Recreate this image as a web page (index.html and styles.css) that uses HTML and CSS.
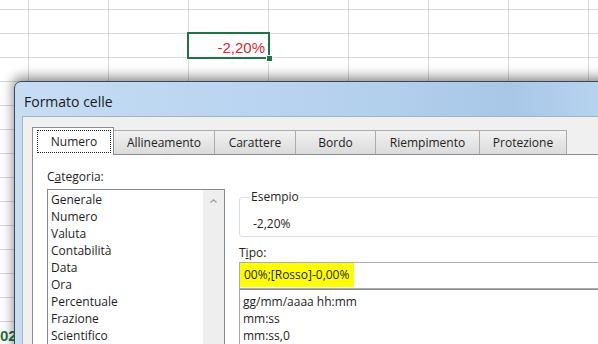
FILE: index.html
```html
<!DOCTYPE html>
<html lang="it">
<head>
    <meta charset="UTF-8">
    <meta name="viewport" content="width=device-width, initial-scale=1.0">
    <title>Formato celle</title>
    <link rel="stylesheet" href="styles.css">
</head>
<body>

    <!-- foglio sotto la finestra -->
    <table class="sheet">
        <tr><td></td><td></td><td></td><td></td><td></td><td></td><td></td><td></td><td></td></tr>
        <tr><td></td><td></td><td></td><td></td><td></td><td></td><td></td><td></td><td></td></tr>
        <tr><td></td><td></td><td></td><td class="active">-2,20%<span class="handle"></span></td><td></td><td></td><td></td><td></td><td></td></tr>
        <tr><td></td><td></td><td></td><td></td><td></td><td></td><td></td><td></td><td></td></tr>
        <tr><td></td><td></td><td></td><td></td><td></td><td></td><td></td><td></td><td></td></tr>
        <tr><td></td><td></td><td></td><td></td><td></td><td></td><td></td><td></td><td></td></tr>
        <tr><td></td><td></td><td></td><td></td><td></td><td></td><td></td><td></td><td></td></tr>
        <tr><td></td><td></td><td></td><td></td><td></td><td></td><td></td><td></td><td></td></tr>
        <tr><td></td><td></td><td></td><td></td><td></td><td></td><td></td><td></td><td></td></tr>
        <tr><td></td><td></td><td></td><td></td><td></td><td></td><td></td><td></td><td></td></tr>
        <tr><td></td><td></td><td></td><td></td><td></td><td></td><td></td><td></td><td></td></tr>
        <tr><td></td><td></td><td></td><td></td><td></td><td></td><td></td><td></td><td></td></tr>
        <tr><td></td><td></td><td></td><td></td><td></td><td></td><td></td><td></td><td></td></tr>
        <tr><td></td><td></td><td></td><td></td><td></td><td></td><td></td><td></td><td></td></tr>
        <tr><td class="note">02</td><td></td><td></td><td></td><td></td><td></td><td></td><td></td><td></td></tr>
    </table>

    <!-- finestra Formato celle -->
    <div class="dialog">
        <div class="titlebar">Formato celle</div>

        <div class="client">
            <div class="tabs">
                <div class="tab selected"><span class="focus">Numero</span></div>
                <div class="tab">Allineamento</div>
                <div class="tab">Carattere</div>
                <div class="tab">Bordo</div>
                <div class="tab">Riempimento</div>
                <div class="tab">Protezione</div>
            </div>

            <div class="panel">
                <div class="col-left">
                    <div class="label">C<u>a</u>tegoria:</div>
                    <div class="listbox">
                        <ul class="items">
                            <li>Generale</li>
                            <li>Numero</li>
                            <li>Valuta</li>
                            <li>Contabilità</li>
                            <li>Data</li>
                            <li>Ora</li>
                            <li>Percentuale</li>
                            <li>Frazione</li>
                            <li>Scientifico</li>
                        </ul>
                        <div class="scrollbar">
                            <svg width="7" height="4" viewBox="0 0 7 4"><polyline points="0.5,3.5 3.5,0.8 6.5,3.5" fill="none" stroke="#9c9c9c" stroke-width="1.2"/></svg>
                        </div>
                    </div>
                </div>

                <div class="col-right">
                    <fieldset class="sample">
                        <legend>Esempio</legend>
                        <div class="sample-value">-2,20%</div>
                    </fieldset>

                    <div class="label">T<u>i</u>po:</div>
                    <div class="type-input"><span class="selection">00%;[Rosso]-0,00%</span></div>
                    <ul class="type-list">
                        <li>gg/mm/aaaa hh:mm</li>
                        <li>mm:ss</li>
                        <li>mm:ss,0</li>
                    </ul>
                </div>
            </div>
        </div>
    </div>

</body>
</html>
```

FILE: styles.css
```css
body {
    margin: 0;
    width: 598px;
    height: 344px;
    overflow: hidden;
    position: relative;
    background-color: #fff;
    font-family: "Open Sans", sans-serif;
    font-size: 12px;
    color: #1e1e1e;
}

/* foglio */
.sheet {
    border-collapse: separate;
    border-spacing: 0;
    table-layout: fixed;
    width: 669px;
}
.sheet td {
    width: 79px;
    height: 23px;
    padding: 0;
    border-right: 1px solid #d9d9d9;
    border-bottom: 1px solid #d9d9d9;
    font: 15px/18px "Liberation Sans", Arial, sans-serif;
    text-align: right;
    vertical-align: bottom;
    white-space: nowrap;
}
.sheet td:first-child {
    width: 28px;
}
.sheet tr:first-child td {
    height: 9px;
}
.sheet .active {
    position: relative;
    padding-right: 3px;
    color: #d2282e;
}
.sheet .active::after {
    content: "";
    position: absolute;
    left: -2px;
    top: -2px;
    right: -2px;
    bottom: -2px;
    border: 2px solid #217346;
}
.handle {
    position: absolute;
    right: -4px;
    bottom: -4px;
    width: 5px;
    height: 5px;
    background-color: #217346;
    box-shadow: 0 0 0 1px #fff;
    z-index: 1;
}
.sheet .note {
    padding-right: 15px;
    font-weight: bold;
    color: #1f7244;
}

/* finestra */
.dialog {
    position: absolute;
    left: 14px;
    top: 81px;
    width: 720px;
    height: 320px;
    padding-left: 7px;
    border: 1px solid #3c4856;
    border-radius: 7px 7px 0 0;
    background: linear-gradient(to right, #c6ddf4 0%, #bad5f1 30%, #b2cfec 52%, #a8c7e7 68%, #bcd7f2 85%, #c2dbf4 100%);
    box-shadow: 0 -3px 12px 1px rgba(0, 0, 0, 0.45);
}
.titlebar {
    height: 30px;
    padding: 4px 0 0 2px;
    display: flex;
    align-items: center;
    font-size: 14px;
    color: #1a1a1a;
}
.client {
    height: 100%;
    padding: 10px 0 0 9px;
    border-top: 1px solid #a3b3c4;
    border-left: 1px solid #a3b3c4;
    background-color: #f0f0f0;
}

/* schede */
.tabs {
    display: flex;
    align-items: flex-start;
    height: 28px;
}
.tab {
    box-sizing: border-box;
    height: 24px;
    margin-top: 3px;
    margin-right: -1px;
    border: 1px solid #acacac;
    border-bottom: none;
    background: linear-gradient(#f3f3f3, #e6e6e6 50%, #dbdbdb);
    display: flex;
    align-items: center;
    justify-content: center;
    color: #1e1e1e;
}
.tab:nth-child(2) { width: 102px; }
.tab:nth-child(3) { width: 82px; }
.tab:nth-child(4) { width: 81px; }
.tab:nth-child(5) { width: 105px; }
.tab:nth-child(6) { width: 88px; }
.tab.selected {
    position: relative;
    z-index: 1;
    width: 82px;
    height: 28px;
    margin-top: 0;
    padding: 2px 2px 2px 4px;
    border-color: #898c95;
    background: #fff;
}
.focus {
    flex: 1;
    height: 23px;
    box-sizing: border-box;
    border: 1px dotted #222;
    display: flex;
    align-items: center;
    justify-content: center;
}

.panel {
    margin-top: -1px;
    height: 260px;
    padding: 14px 0 0 14px;
    border: 1px solid #898c95;
    background-color: #fff;
    display: flex;
    gap: 14px;
}
.label {
    line-height: 16px;
}

/* elenco categorie */
.col-left {
    width: 178px;
}
.listbox {
    margin-top: 4px;
    height: 200px;
    border: 1px solid #828790;
    display: flex;
}
.items {
    flex: 1;
    list-style: none;
    margin: 0;
    padding: 1px 0 0 3px;
    line-height: 17px;
}
.scrollbar {
    width: 21px;
    background-color: #eeeeee;
    display: flex;
    justify-content: center;
    align-items: flex-start;
    padding-top: 9px;
    box-sizing: border-box;
}

/* colonna destra */
.col-right {
    width: 420px;
    padding-top: 20px;
}
.sample {
    margin: 0 0 8px;
    padding: 0 0 4px 10px;
    min-width: 0;
    border: 1px solid #d8dfe4;
    border-radius: 3px;
}
.sample legend {
    padding: 0 1px;
    line-height: 16px;
}
.sample-value {
    margin-top: 11px;
    padding-left: 3px;
    line-height: 16px;
}
.type-input {
    margin-top: 1px;
    height: 25px;
    border: 1px solid #abadb3;
}
.selection {
    display: inline-block;
    line-height: 24px;
    padding: 0 5px 0 4px;
    background-color: #ffff00;
}
.type-list {
    list-style: none;
    margin: 0;
    height: 80px;
    padding: 3px 0 0 3px;
    border: 1px solid #a8a8a8;
    border-top-color: #8c8c8c;
    line-height: 17px;
}
```
